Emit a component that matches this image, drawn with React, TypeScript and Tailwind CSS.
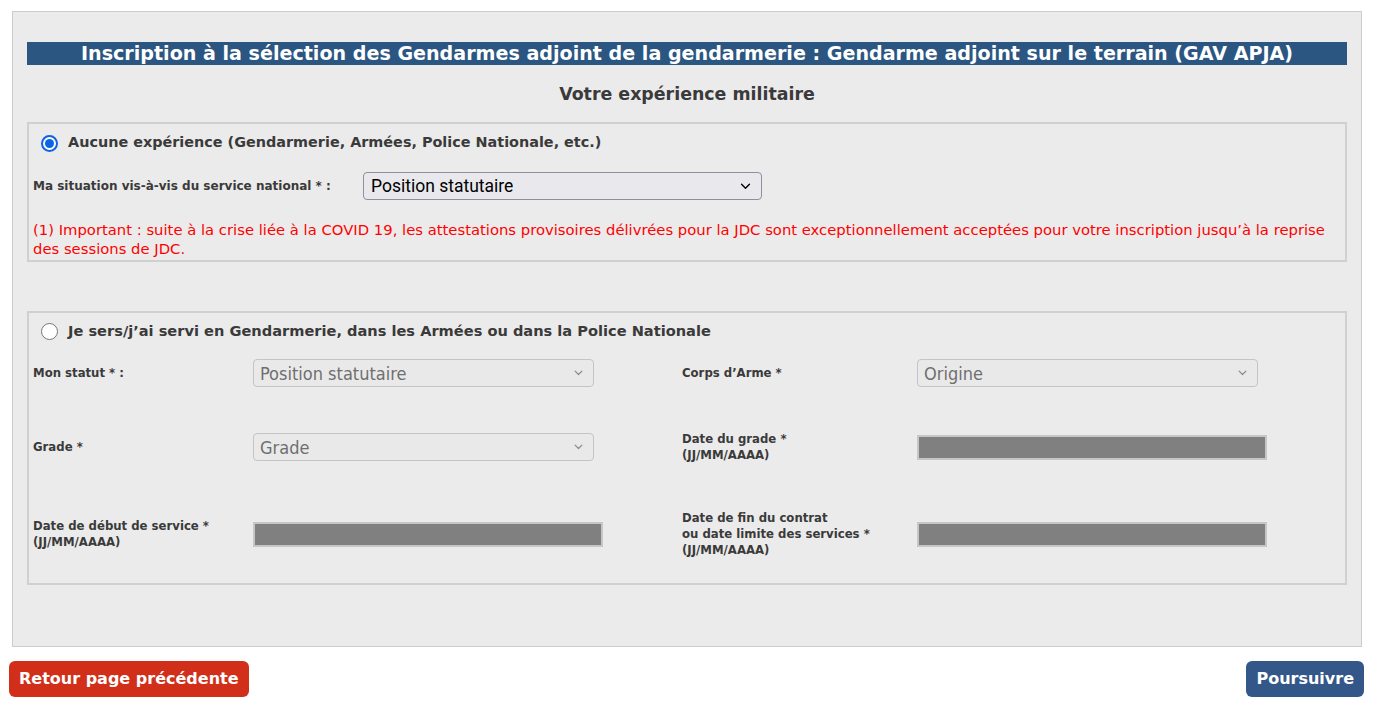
import { ReactNode } from "react";

const verdana = "font-['DejaVu_Sans',sans-serif]";
const narrow = "font-['Liberation_Sans_Narrow','DejaVu_Sans_Condensed',sans-serif]";

function Radio({ checked }: { checked?: boolean }) {
  if (checked) {
    return (
      <span className="flex h-[17px] w-[17px] shrink-0 items-center justify-center rounded-full border-2 border-[#0b63e5] bg-white">
        <span className="h-[9px] w-[9px] rounded-full bg-[#0b63e5]" />
      </span>
    );
  }
  return (
    <span className="h-[17px] w-[17px] shrink-0 rounded-full border border-[#767676] bg-white" />
  );
}

function Chevron({ className }: { className: string }) {
  return (
    <svg className={className} viewBox="0 0 12 8" fill="none" stroke="currentColor">
      <path d="M1.5 1.5 6 6l4.5-4.5" strokeWidth={1.6} strokeLinecap="round" strokeLinejoin="round" />
    </svg>
  );
}

function DisabledSelect({ value }: { value: string }) {
  return (
    <div className="flex h-[28px] w-[341px] items-center justify-between rounded-[4px] border border-[#c4c4c4] bg-[#e9e9ea] pl-[6px] pr-[10px]">
      <span className={`${narrow} text-[18px] text-[#6f6f6f]`}>{value}</span>
      <Chevron className="h-[6px] w-[9px] text-[#8a8a8a]" />
    </div>
  );
}

function GrayInput() {
  return <div className="h-[25px] w-[350px] border-2 border-[#c6c6c6] bg-[#808080]" />;
}

function Field({ label, children }: { label: ReactNode; children: ReactNode }) {
  return (
    <div className="flex items-center">
      <div className={`${narrow} w-[220px] text-[13px] font-bold leading-[16px] text-[#3a3a3a]`}>
        {label}
      </div>
      {children}
    </div>
  );
}

export default function App() {
  return (
    <div className={`min-h-screen bg-white ${verdana}`}>
      <div className="ml-[12px] mr-[13px] pt-[11px]">
        <div className="h-[636px] border border-[#cccccc] bg-[#ebebeb] px-[14px] pt-[30px]">
          <div className="h-[23px] whitespace-nowrap bg-[#2b5682] text-center text-[19.1px] font-bold leading-[23px] text-white">
            Inscription à la sélection des Gendarmes adjoint de la gendarmerie : Gendarme adjoint sur le terrain (GAV APJA)
          </div>
          <h2 className="mt-[19px] text-center text-[17.4px] font-bold leading-[20px] text-[#3a3a3a]">
            Votre expérience militaire
          </h2>

          <div className="mt-[18px] border-2 border-[#d0d0d0] px-[4px] pb-[2px] pt-[9px]">
            <div className="flex h-[20px] items-center gap-[10px] pl-[8px]">
              <Radio checked />
              <span className="text-[14.4px] font-bold text-[#3a3a3a]">
                Aucune expérience (Gendarmerie, Armées, Police Nationale, etc.)
              </span>
            </div>
            <div className="mt-[19px] flex items-center">
              <span className="w-[330px] text-[12px] font-bold text-[#3a3a3a]">
                Ma situation vis-à-vis du service national * :
              </span>
              <div className="flex h-[28px] w-[399px] items-center justify-between rounded-[4px] border border-[#8f8f9d] bg-[#e9e9ed] pl-[7px] pr-[10px]">
                <span className="font-['Roboto',sans-serif] text-[17.5px] text-black">Position statutaire</span>
                <Chevron className="h-[7px] w-[11px] text-black" />
              </div>
            </div>
            <p className="mt-[20px] text-[14.8px] leading-[19px] text-[#ff0000]">
              (1) Important : suite à la crise liée à la COVID 19, les attestations provisoires délivrées pour la JDC sont exceptionnellement acceptées pour votre inscription jusqu’à la reprise des sessions de JDC.
            </p>
          </div>

          <div className="mt-[49px] border-2 border-[#d0d0d0] px-[4px] pb-[25px] pt-[8px]">
            <div className="flex h-[20px] items-center gap-[10px] pl-[8px]">
              <Radio />
              <span className="text-[14.6px] font-bold text-[#3a3a3a]">
                Je sers/j’ai servi en Gendarmerie, dans les Armées ou dans la Police Nationale
              </span>
            </div>

            <div className="mt-[12px] grid grid-cols-[649px_1fr] items-center">
              <div className="flex h-[40px] items-center">
                <Field label="Mon statut * :">
                  <DisabledSelect value="Position statutaire" />
                </Field>
              </div>
              <div className="flex h-[40px] items-center">
                <Field label="Corps d’Arme *">
                  <span className="w-[15px]" />
                  <DisabledSelect value="Origine" />
                </Field>
              </div>

              <div className="mt-[34px] flex h-[40px] items-center">
                <Field label="Grade *">
                  <DisabledSelect value="Grade" />
                </Field>
              </div>
              <div className="mt-[34px] flex h-[40px] items-center">
                <Field label={<>Date du grade *<br />(JJ/MM/AAAA)</>}>
                  <span className="w-[15px]" />
                  <GrayInput />
                </Field>
              </div>

              <div className="mt-[43px] flex h-[48px] items-center">
                <Field label={<>Date de début de service *<br />(JJ/MM/AAAA)</>}>
                  <GrayInput />
                </Field>
              </div>
              <div className="mt-[43px] flex h-[48px] items-center">
                <Field label={<>Date de fin du contrat<br />ou date limite des services *<br />(JJ/MM/AAAA)</>}>
                  <span className="w-[15px]" />
                  <GrayInput />
                </Field>
              </div>
            </div>
          </div>
        </div>
      </div>

      <div className="mt-[14px] flex justify-between pl-[9px] pr-[11px]">
        <button className="h-[36px] whitespace-nowrap rounded-[6px] bg-[#d12f1a] px-[10px] text-[16px] font-bold text-white">
          Retour page précédente
        </button>
        <button className="h-[36px] whitespace-nowrap rounded-[6px] bg-[#34578a] px-[10px] text-[16px] font-bold text-white">
          Poursuivre
        </button>
      </div>
    </div>
  );
}
